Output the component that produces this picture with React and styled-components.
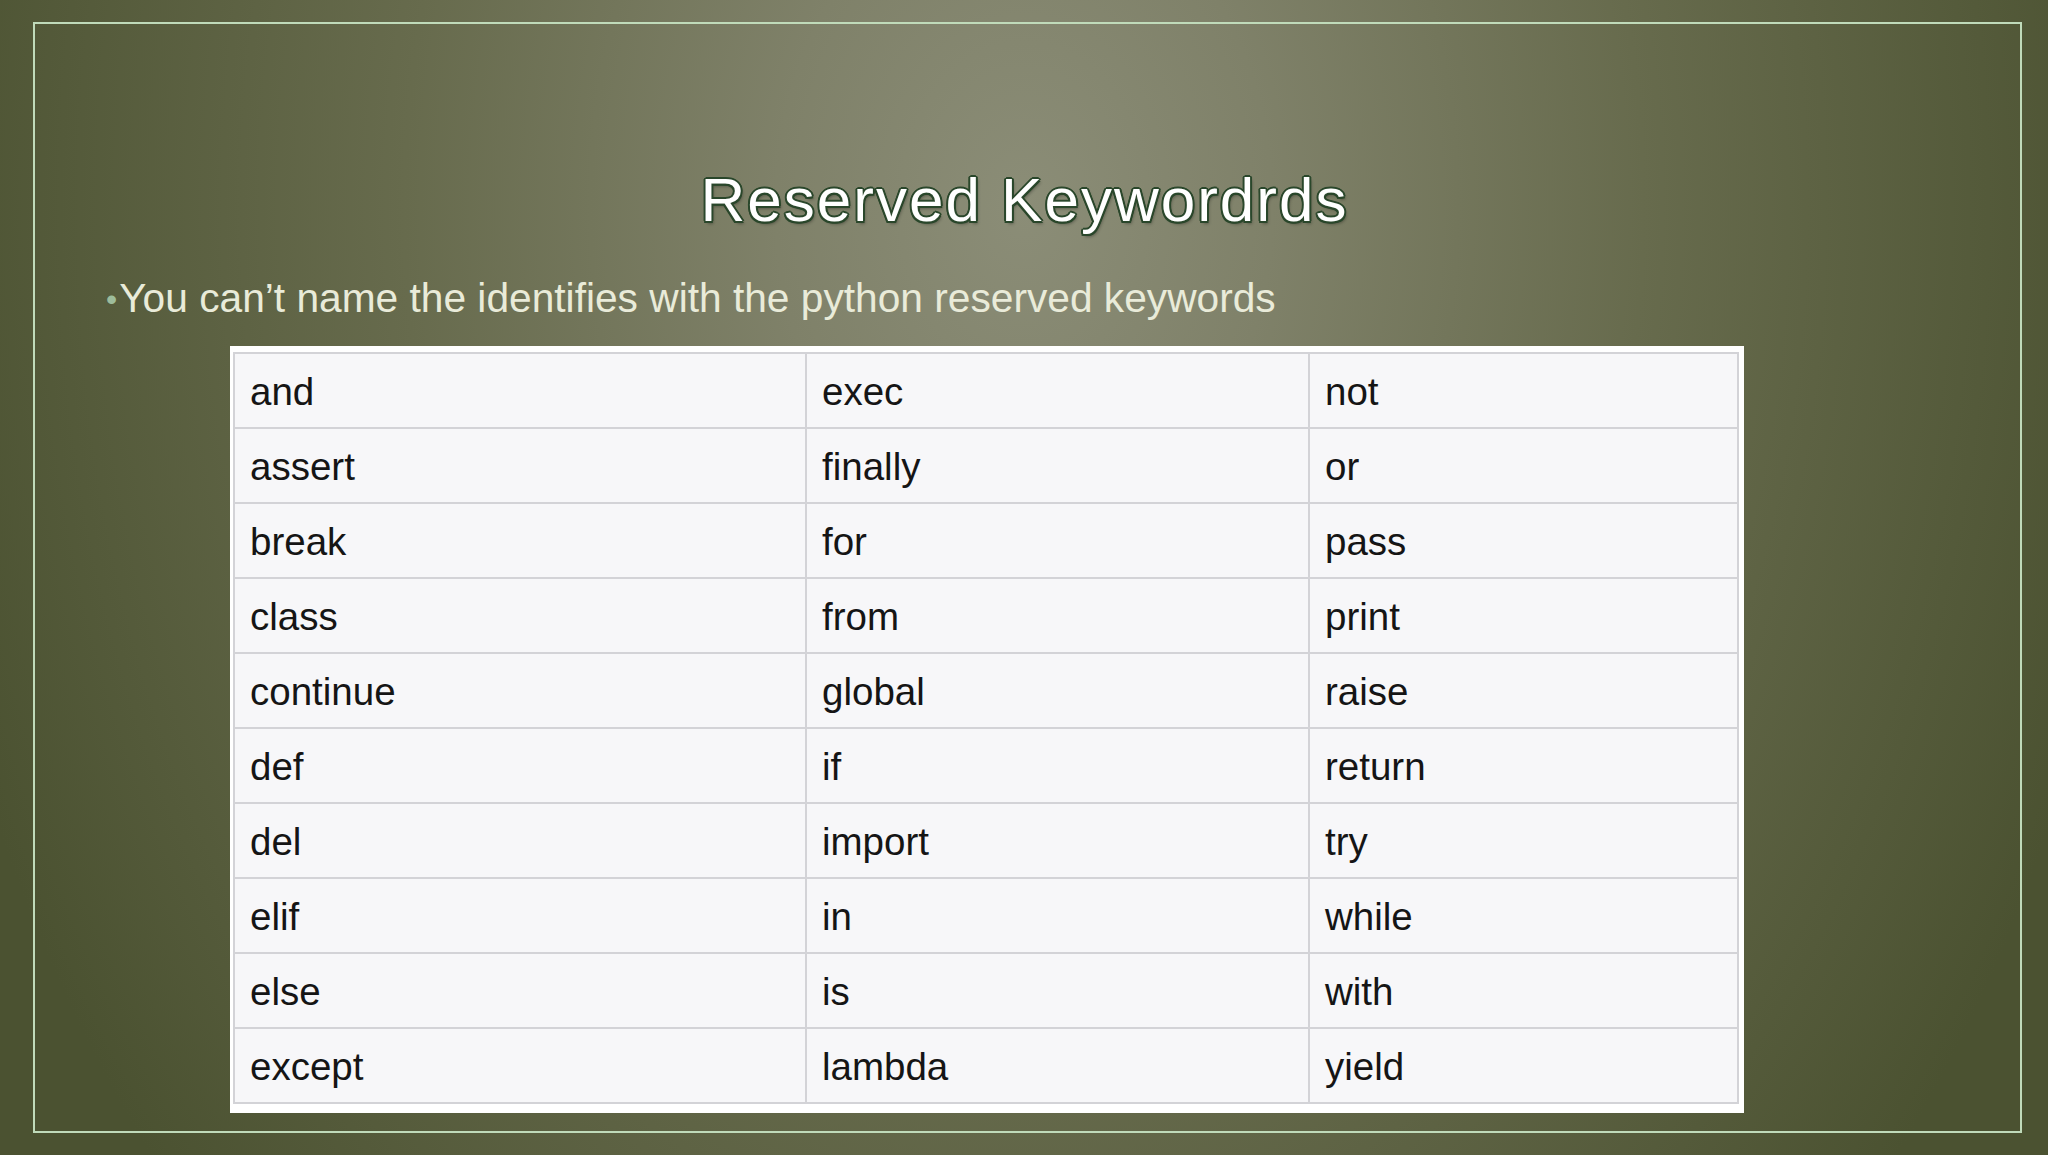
import React from "react"
import styled, { createGlobalStyle } from "styled-components"

const keywords = [
  ["and", "exec", "not"],
  ["assert", "finally", "or"],
  ["break", "for", "pass"],
  ["class", "from", "print"],
  ["continue", "global", "raise"],
  ["def", "if", "return"],
  ["del", "import", "try"],
  ["elif", "in", "while"],
  ["else", "is", "with"],
  ["except", "lambda", "yield"],
]

const GlobalStyle = createGlobalStyle`
  html, body {
    margin: 0;
    padding: 0;
    background: #4b5231;
  }
  * {
    box-sizing: border-box;
  }
`

const App = () => {
  return (
    <>
      <GlobalStyle />
      <Slide>
        <Frame>
          <Title>Reserved Keywordrds</Title>
          <Bullet>
            <Dot>•</Dot>You can’t name the identifies with the python reserved
            keywords
          </Bullet>
          <TableBox>
            <KeywordGrid>
              {keywords.flat().map((word, i) => (
                <Cell key={i}>{word}</Cell>
              ))}
            </KeywordGrid>
          </TableBox>
        </Frame>
      </Slide>
    </>
  )
}

export default App

export const Slide = styled.div`
  width: 2048px;
  height: 1155px;
  padding: 22px 26px 22px 33px;
  background: radial-gradient(
    ellipse 55% 130% at 50% 18%,
    #8b8d77 0%,
    #7f8169 22%,
    #676b4d 55%,
    #4b5231 100%
  );
  font-family: "Liberation Sans", Arial, sans-serif;
`

export const Frame = styled.div`
  width: 100%;
  height: 100%;
  border: 2px solid #c0dbba;
  display: flex;
  flex-direction: column;
`

export const Title = styled.h1`
  margin: 145px 6px 0 0;
  font-size: 62px;
  line-height: 1;
  font-weight: normal;
  letter-spacing: 2px;
  text-align: center;
  color: #ffffff;
  text-shadow: 2px 0 0 #2a472b, -2px 0 0 #2a472b, 0 2px 0 #2a472b,
    0 -2px 0 #2a472b, 1.5px 1.5px 0 #2a472b, -1.5px -1.5px 0 #2a472b,
    1.5px -1.5px 0 #2a472b, -1.5px 1.5px 0 #2a472b,
    2px 3px 3px rgba(0, 0, 0, 0.3);
`

export const Bullet = styled.p`
  margin: 47px 0 0 71px;
  font-size: 40.7px;
  line-height: 1;
  color: #e9ebd9;
  display: flex;
  align-items: center;
`

export const Dot = styled.span`
  font-size: 32px;
  color: #9dbc9b;
  margin-right: 2px;
  position: relative;
  top: 1px;
`

export const TableBox = styled.div`
  margin: 27px 0 0 195px;
  width: 1514px;
  padding: 6px 5px 9px 3px;
  background: #ffffff;
`

export const KeywordGrid = styled.div`
  display: grid;
  grid-template-columns: 570px 501px 427px;
  grid-auto-rows: 73px;
  gap: 2px;
  padding: 2px;
  background: #d3d3d7;
`

export const Cell = styled.div`
  display: flex;
  align-items: center;
  padding: 3px 0 0 15px;
  background: #f7f7f9;
  font-size: 38.5px;
  color: #151515;
`
